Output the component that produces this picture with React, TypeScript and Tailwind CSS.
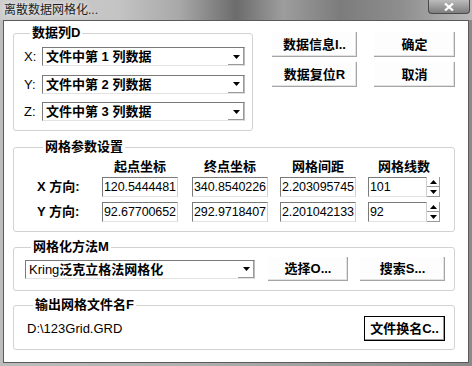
import React from "react";

const FONT = { fontFamily: '"Liberation Sans", "Noto Sans CJK SC", sans-serif' };

function Arrow({ up }: { up?: boolean }) {
  return (
    <svg width="7" height="4" viewBox="0 0 7 4">
      {up ? <polygon points="0,4 7,4 3.5,0" fill="#000" /> : <polygon points="0,0 7,0 3.5,4" fill="#000" />}
    </svg>
  );
}

function Combo({ text, w }: { text: React.ReactNode; w: string }) {
  return (
    <div className={`${w} h-[19px] flex items-center border-t border-l border-t-[#7a7a7a] border-l-[#7a7a7a] border-b border-r border-b-[#e3e3e3] border-r-[#bdbdbd] bg-white`}>
      <div className="flex-1 pl-[3px] text-[13px] font-bold leading-none text-black whitespace-nowrap">{text}</div>
      <div className="w-[16px] h-[17px] flex items-center justify-center shadow-[inset_-1px_-1px_0_#9a9a9a]">
        <Arrow />
      </div>
    </div>
  );
}

function Btn({ label, w, h = "h-[25px]", def }: { label: string; w: string; h?: string; def?: boolean }) {
  return (
    <div
      className={`${w} ${h} flex items-center justify-center bg-[#fdfdfd] text-[13px] font-bold text-black ${
        def ? "border border-black shadow-[inset_-1px_-1px_0_#9a9a9a]" : "shadow-[inset_-1px_-1px_0_#a5a5a5,inset_-2px_-2px_0_#e2e2e2]"
      }`}
    >
      {label}
    </div>
  );
}

function Field({ value, w }: { value: string; w: string }) {
  return (
    <div className={`${w} h-[20px] flex items-center pl-[1px] border-t border-l border-t-[#7a7a7a] border-l-[#7a7a7a] border-b border-r border-b-[#e3e3e3] border-r-[#d0d0d0] bg-white text-[12.5px] tracking-[-0.1px] text-black overflow-hidden whitespace-nowrap`}>
      {value}
    </div>
  );
}

function Spin({ value }: { value: string }) {
  return (
    <div className="w-[72px] h-[20px] flex">
      <Field value={value} w="w-[59px]" />
      <div className="w-[13px] flex flex-col">
        <div className="h-[10px] flex items-center justify-center shadow-[inset_-1px_-1px_0_#9a9a9a]">
          <Arrow up />
        </div>
        <div className="h-[10px] flex items-center justify-center shadow-[inset_-1px_-1px_0_#9a9a9a]">
          <Arrow />
        </div>
      </div>
    </div>
  );
}

function Group({ title, className, children }: { title: string; className: string; children: React.ReactNode }) {
  return (
    <fieldset className={`border border-[#d2d2d2] rounded-[3px] ${className}`}>
      <legend className="ml-[6px] px-[2px] text-[13px] leading-[14px] font-bold text-black">{title}</legend>
      {children}
    </fieldset>
  );
}

export default function App() {
  const rows = [
    { k: "X:", v: "文件中第 1 列数据" },
    { k: "Y:", v: "文件中第 2 列数据" },
    { k: "Z:", v: "文件中第 3 列数据" },
  ];
  return (
    <div className="w-[472px] h-[366px] flex flex-col bg-[linear-gradient(90deg,#bdbdbd_0%,#b0b0b0_40%,#8a8a8a_100%)]" style={FONT}>
      <div className="h-[20px] flex items-start justify-between bg-[linear-gradient(90deg,#cdcdcd_0%,#c4c4c4_25%,#a8a8a8_38%,#6c6c6c_50%,#9d9d9d_60%,#7c7c7c_72%,#8e8e8e_85%,#b9b9b9_100%)]">
        <div className="pl-[4px] pt-[2px] text-[12px] leading-[16px] text-[#1e1e1e] [text-shadow:0_0_6px_#ffffff]">离散数据网格化...</div>
        <div className="mr-[2px] w-[42px] h-[14px] flex items-center justify-center rounded-b-[4px] border border-t-0 border-[#4a4a4a] bg-[linear-gradient(180deg,#bcbcbc,#7d7d7d)]">
          <svg width="10" height="8" viewBox="0 0 10 8">
            <path d="M1 0.5 L9 7.5 M9 0.5 L1 7.5" stroke="#fff" strokeWidth="2.2" />
          </svg>
        </div>
      </div>
      <div className="mx-[3px] h-[343px] border border-[#5a5a5a] bg-white flex flex-col">
        <div className="flex items-start">
          <Group title="数据列D" className="ml-[9px] mt-[5px] w-[240px] h-[105px] pl-[10px] pt-[7px]">
            <div className="flex flex-col gap-[8px]">
              {rows.map((r) => (
                <div key={r.k} className="flex items-center">
                  <div className="w-[18px] text-[13px] text-black">{r.k}</div>
                  <Combo text={r.v} w="w-[203px]" />
                </div>
              ))}
            </div>
          </Group>
          <div className="ml-[19px] mt-[11px] grid grid-cols-[85px_81px] gap-x-[17px] gap-y-[5px]">
            <Btn label="数据信息I.." w="w-[85px]" />
            <Btn label="确定" w="w-[81px]" />
            <Btn label="数据复位R" w="w-[85px]" />
            <Btn label="取消" w="w-[81px]" />
          </div>
        </div>

        <Group title="网格参数设置" className="ml-[9px] mt-[9px] w-[442px] pl-[23px] pt-[6px] pb-[9px]">
          <div className="flex text-[13px] font-bold text-black leading-[14px]">
            <div className="w-[65px]" />
            <div className="w-[76px] text-center">起点坐标</div>
            <div className="w-[76px] ml-[14px] text-center">终点坐标</div>
            <div className="w-[76px] ml-[12px] text-center">网格间距</div>
            <div className="w-[72px] ml-[12px] text-center">网格线数</div>
          </div>
          <div className="mt-[3px] flex flex-col gap-[5px]">
            {[
              ["X 方向:", "120.5444481", "340.8540226", "2.203095745", "101"],
              ["Y 方向:", "92.67700652", "292.9718407", "2.201042133", "92"],
            ].map((r) => (
              <div key={r[0]} className="flex items-center">
                <div className="w-[65px] text-[13px] font-bold text-black">{r[0]}</div>
                <Field value={r[1]} w="w-[76px]" />
                <div className="ml-[14px]"><Field value={r[2]} w="w-[76px]" /></div>
                <div className="ml-[12px]"><Field value={r[3]} w="w-[76px]" /></div>
                <div className="ml-[12px]"><Spin value={r[4]} /></div>
              </div>
            ))}
          </div>
        </Group>

        <Group title="网格化方法M" className="ml-[9px] mt-[8px] w-[442px] pl-[11px] pt-[3px] pb-[9px]">
          <div className="flex items-center">
            <Combo text={<><span className="font-normal">Kring</span>泛克立格法网格化</>} w="w-[230px]" />
            <div className="ml-[13px]"><Btn label="选择O..." w="w-[80px]" h="h-[24px]" /></div>
            <div className="ml-[12px]"><Btn label="搜索S..." w="w-[85px]" h="h-[24px]" /></div>
          </div>
        </Group>

        <Group title="输出网格文件名F" className="ml-[9px] mt-[7px] w-[442px] pl-[13px] pr-[9px] pt-[4px] pb-[8px]">
          <div className="flex items-center justify-between">
            <div className="text-[13px] text-black">D:\123Grid.GRD</div>
            <Btn label="文件换名C.." w="w-[81px]" def />
          </div>
        </Group>
      </div>
    </div>
  );
}
